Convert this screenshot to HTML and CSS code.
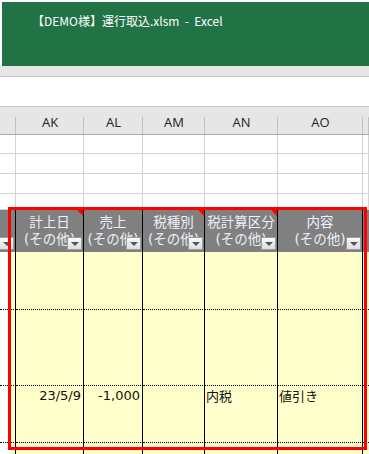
FILE: index.html
```html
<!DOCTYPE html>
<html lang="ja">
<head>
    <meta charset="UTF-8">
    <title>【DEMO様】運行取込.xlsm - Excel</title>
    <link rel="stylesheet" href="styles.css">
</head>
<body>
    <div class="titlebar">
        <span class="title">【DEMO様】運行取込.xlsm  -  Excel</span>
    </div>
    <div class="ribbon"></div>
    <div class="formula"></div>

    <div class="sheet">
        <!-- 列見出し -->
        <div class="cell colhead"></div>
        <div class="cell colhead">AK</div>
        <div class="cell colhead">AL</div>
        <div class="cell colhead">AM</div>
        <div class="cell colhead">AN</div>
        <div class="cell colhead">AO</div>
        <div class="cell colhead"></div>

        <!-- 空の行 -->
        <div class="cell"></div><div class="cell"></div><div class="cell"></div><div class="cell"></div><div class="cell"></div><div class="cell"></div><div class="cell"></div>
        <div class="cell"></div><div class="cell"></div><div class="cell"></div><div class="cell"></div><div class="cell"></div><div class="cell"></div><div class="cell"></div>
        <div class="cell"></div><div class="cell"></div><div class="cell"></div><div class="cell"></div><div class="cell"></div><div class="cell"></div><div class="cell"></div>
        <div class="cell"></div><div class="cell"></div><div class="cell"></div><div class="cell"></div><div class="cell"></div><div class="cell"></div><div class="cell"></div>

        <!-- 表の見出し -->
        <div class="cell head"><span class="dd"></span></div>
        <div class="cell head note">計上日<br>(その他)<span class="dd"></span></div>
        <div class="cell head">売上<br>(その他)<span class="dd"></span></div>
        <div class="cell head note">税種別<br>(その他)<span class="dd"></span></div>
        <div class="cell head note">税計算区分<br>(その他)<span class="dd"></span></div>
        <div class="cell head">内容<br>(その他)<span class="dd"></span></div>
        <div class="cell head last"></div>

        <!-- データ -->
        <div class="cell data edge"></div><div class="cell data"></div><div class="cell data"></div><div class="cell data"></div><div class="cell data"></div><div class="cell data"></div><div class="cell data last"></div>
        <div class="cell data edge"></div><div class="cell data"></div><div class="cell data"></div><div class="cell data"></div><div class="cell data"></div><div class="cell data"></div><div class="cell data last"></div>
        <div class="cell data edge"></div>
        <div class="cell data num">23/5/9</div>
        <div class="cell data num">-1,000</div>
        <div class="cell data"></div>
        <div class="cell data txt">内税</div>
        <div class="cell data txt">値引き</div>
        <div class="cell data last"></div>
        <div class="cell data edge"></div><div class="cell data"></div><div class="cell data"></div><div class="cell data"></div><div class="cell data"></div><div class="cell data"></div><div class="cell data last"></div>
    </div>

    <div class="highlight"></div>
</body>
</html>
```

FILE: styles.css
```css
html, body {
    margin: 0;
    padding: 0;
    height: 454px;
    overflow: hidden;
    background: #fff;
    font-family: "DejaVu Sans", "Noto Sans CJK JP", sans-serif;
}
.titlebar {
    margin: 2px 0 0 2px;
    height: 64px;
    background: #217346;
    color: #fff;
    box-sizing: border-box;
    padding: 9px 0 0 30px;
}
.title {
    font-family: "Noto Sans CJK JP", sans-serif;
    font-size: 12px;
    white-space: pre;
}
.ribbon {
    height: 11px;
    background: #e6e6e6;
    border-bottom: 1px solid #c6c6c6;
    box-sizing: border-box;
}
.formula {
    height: 30px;
    background: #fff;
    border-bottom: 1px solid #c6c6c6;
    box-sizing: border-box;
}
.sheet {
    display: grid;
    grid-template-columns: 16px 68px 59px 62px 73px 85px 1fr;
    grid-template-rows: 28px 19px 20px 20px 16px 42px 58px 76px 57px 30px;
}
.cell {
    box-sizing: border-box;
    border-right: 1px solid #d4d4d4;
    border-bottom: 1px solid #d4d4d4;
    position: relative;
    overflow: hidden;
    white-space: nowrap;
}
.colhead {
    background: #e6e6e6;
    border-right: none;
    border-bottom: 1px solid #ababab;
    font-family: "Open Sans", sans-serif;
    font-size: 13px;
    color: #222;
    text-align: center;
    padding-top: 6px;
}
.colhead::after {
    content: "";
    position: absolute;
    right: 0;
    top: 10px;
    bottom: 0;
    width: 1px;
    background: #c0c0c0;
}
.head {
    background: #808080;
    border-right: 1px solid #000;
    border-bottom: none;
    color: #eef2f8;
    font-family: "DejaVu Sans", "Noto Sans CJK JP", sans-serif;
    font-size: 13.5px;
    line-height: 17px;
    text-align: center;
    padding-top: 4px;
}
.head.last {
    border-right: none;
}
.note::before {
    content: "";
    position: absolute;
    top: 0;
    right: 0;
    border-top: 6px solid #f00;
    border-left: 6px solid transparent;
}
.dd {
    position: absolute;
    right: 1px;
    bottom: 2px;
    width: 15px;
    height: 13px;
    box-sizing: border-box;
    border: 1px solid #9a9a9a;
    background: linear-gradient(#fafafa, #dedede);
}
.dd::after {
    content: "";
    position: absolute;
    left: 3px;
    top: 4px;
    border-top: 4px solid #555;
    border-left: 4px solid transparent;
    border-right: 4px solid transparent;
}
.data {
    background: #ffffcc;
    border-right: 1px solid #000;
    border-bottom: 1px dotted #000;
    font-size: 13px;
    color: #111;
    padding-top: 2px;
}
.data.edge {
    background: linear-gradient(to right, #fff 11px, #ffffcc 11px);
}
.data.last {
    border-right: none;
}
.num {
    text-align: right;
    padding-right: 2px;
}
.txt {
    font-family: "Noto Sans CJK JP", sans-serif;
    padding-left: 1px;
    padding-top: 0;
}
.highlight {
    position: absolute;
    left: 8px;
    top: 207px;
    width: 359px;
    height: 243px;
    box-sizing: border-box;
    border: 3px solid #f00;
}
```
